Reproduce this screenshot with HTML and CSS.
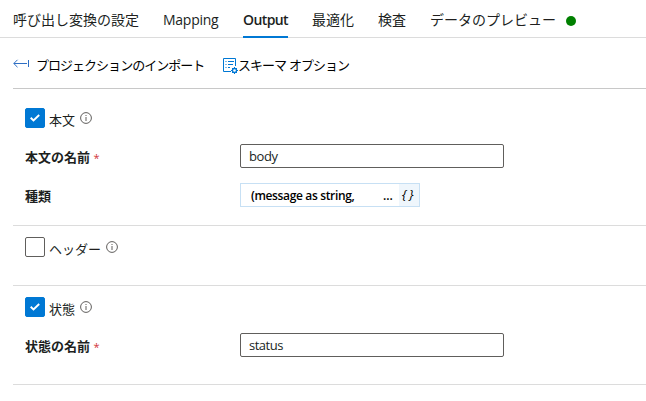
FILE: index.html
```html
<!DOCTYPE html>
<html lang="ja">
<head>
<meta charset="utf-8">
<title>Output</title>
<link rel="stylesheet" href="styles.css">
</head>
<body>
<nav class="tabs">
  <a class="tab">呼び出し変換の設定</a>
  <a class="tab tab-mapping">Mapping</a>
  <a class="tab active">Output</a>
  <a class="tab">最適化</a>
  <a class="tab">検査</a>
  <a class="tab">データのプレビュー</a>
  <span class="dot"></span>
</nav>
<main class="content">
  <div class="toolbar">
    <button class="command import">
      <svg width="17" height="10" viewBox="0 0 17 10" fill="none" stroke="#2f6fc4"><path d="M.8 4.500H14M4.500 .8.8 4.500l3.700 3.700M15.500 1v7"/></svg>
      <span>プロジェクションのインポート</span>
    </button>
    <button class="command schema">
      <svg width="15" height="16" viewBox="0 0 15 16" fill="none" stroke="#0078d4"><path d="M8 13.500H.5V.5h12V8M2.500 3.500h1M5 3.500h6M2.500 6.500h1M5 6.500h5M2.500 9.500h1M5 9.500h2"/><circle cx="11.500" cy="12.500" r="2" stroke-width="1.300"/><path d="M11.500 9v1.500M11.500 14.500V16M8 12.500h1.500M13.500 12.500H15M9 10l1 1M13 14l1 1M14 10l-1 1M10 14l-1 1"/></svg>
      <span>スキーマ オプション</span>
    </button>
  </div>
  <section class="group group-body">
    <div class="check-row">
      <span class="checkbox checked"><svg width="10" height="8" viewBox="0 0 10 8" fill="none" stroke="#fff" stroke-width="1.900"><path d="M.7 3.700 3.500 6.400 9.200 1"/></svg></span>
      <span class="check-label">本文</span>
      <svg class="info" width="12" height="12" viewBox="0 0 12 12" fill="none" stroke="#605e5c"><circle cx="6" cy="6" r="5.400"/><path d="M6 5v4M6 3v1"/></svg>
    </div>
    <div class="field">
      <span class="label">本文の名前 <span class="required">*</span></span>
      <input class="input" value="body">
    </div>
    <div class="field type-field">
      <span class="label">種類</span>
      <div class="type-box"><span class="type-text">(message as string,</span><span class="more">...</span><span class="braces">{}</span></div>
    </div>
  </section>
  <section class="group group-header">
    <div class="check-row">
      <span class="checkbox"></span>
      <span class="check-label">ヘッダー</span>
      <svg class="info" width="12" height="12" viewBox="0 0 12 12" fill="none" stroke="#605e5c"><circle cx="6" cy="6" r="5.400"/><path d="M6 5v4M6 3v1"/></svg>
    </div>
  </section>
  <section class="group group-status">
    <div class="check-row">
      <span class="checkbox checked"><svg width="10" height="8" viewBox="0 0 10 8" fill="none" stroke="#fff" stroke-width="1.900"><path d="M.7 3.700 3.500 6.400 9.200 1"/></svg></span>
      <span class="check-label">状態</span>
      <svg class="info" width="12" height="12" viewBox="0 0 12 12" fill="none" stroke="#605e5c"><circle cx="6" cy="6" r="5.400"/><path d="M6 5v4M6 3v1"/></svg>
    </div>
    <div class="field">
      <span class="label">状態の名前 <span class="required">*</span></span>
      <input class="input status" value="status">
    </div>
  </section>
</main>
</body>
</html>
```
FILE: styles.css
```css
* { box-sizing: border-box; }

body {
  margin: 0;
  background: #fff;
  color: #201f1e;
  font-family: "Open Sans", "Noto Sans CJK JP", sans-serif;
  font-size: 13px;
  overflow: hidden;
}

.tabs {
  display: flex;
  gap: 24px;
  height: 38px;
  padding-left: 13px;
  box-shadow: inset 0 -1px #dcdcdc;
  font-size: 14px;
  white-space: nowrap;
}

.tab {
  height: 38px;
  line-height: 40px;
}

.tab-mapping {
  width: 56px;
  letter-spacing: -0.25px;
}

.active {
  width: 45px;
  border-bottom: 2px solid #0078d4;
  font-weight: 600;
  letter-spacing: -0.6px;
}

.dot {
  width: 10px;
  height: 10px;
  margin: 16px 0 0 -14px;
  border-radius: 50%;
  background: #008000;
}

.content { margin-left: 13px; }

.toolbar {
  display: flex;
  height: 51px;
  border-bottom: 1px solid #c8c8c8;
}

.command {
  display: flex;
  height: 50px;
  padding: 0;
  border: 0;
  background: none;
  color: #000;
  font: 13px/54px "Noto Sans CJK JP", sans-serif;
  letter-spacing: -0.98px;
  white-space: nowrap;
}

.import { width: 210px; gap: 6px; }
.import svg { margin-top: 21px; }
.schema svg { margin-top: 20px; }
.schema { word-spacing: 1px; }

.group {
  padding: 0 12px;
  border-bottom: 1px solid #dcdcdc;
}

.group-body { height: 137px; padding-top: 19px; }
.group-header { height: 60px; padding-top: 11px; }
.group-status { height: 99px; padding-top: 11px; }

.check-row {
  display: flex;
  height: 20px;
}

.checkbox {
  display: flex;
  align-items: center;
  justify-content: center;
  width: 20px;
  height: 20px;
  border: 1px solid #605e5c;
  border-radius: 2px;
}

.checked {
  border-color: #0078d4;
  background: #0078d4;
}

.check-label {
  margin-left: 4px;
  line-height: 24px;
}

.info { margin: 4px 0 0 5px; }

.field {
  display: flex;
  align-items: center;
  height: 24px;
  margin-top: 16px;
}

.type-field { margin-top: 15px; }

.label {
  width: 215px;
  font-weight: 700;
}

.required {
  color: #d13438;
  font-size: 11px;
  font-weight: 400;
}

.input {
  width: 264px;
  height: 24px;
  padding: 0 8px;
  border: 1px solid #605e5c;
  border-radius: 2px;
  color: #201f1e;
  font: 13px "Open Sans", sans-serif;
  letter-spacing: -0.4px;
}

.status { letter-spacing: -0.5px; }

.type-box {
  display: flex;
  width: 180px;
  height: 24px;
  border: 1px solid #c7e0f4;
  padding-left: 10px;
  color: #000;
  font-size: 12px;
  font-weight: 600;
  line-height: 23px;
  white-space: nowrap;
}

.type-text { width: 132px; letter-spacing: -0.35px; }
.more { width: 16px; }

.braces {
  flex: 1;
  padding-left: 3px;
  background: #eff6fc;
  font-size: 13px;
  font-weight: 400;
  font-style: italic;
  line-height: 20px;
  letter-spacing: 2.5px;
}
```
